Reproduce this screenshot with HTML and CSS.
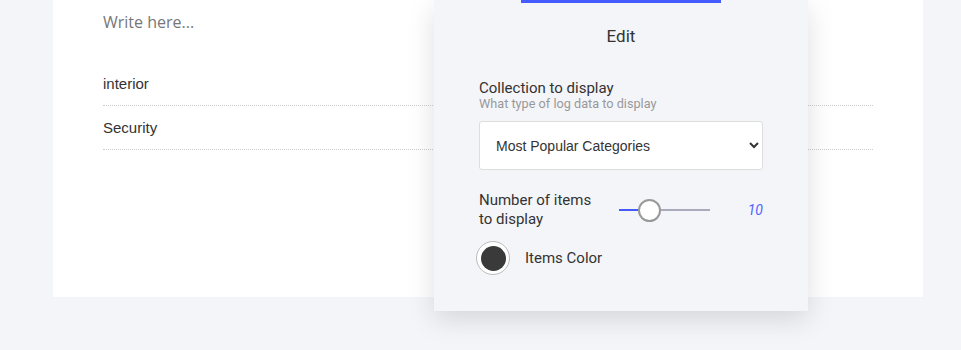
FILE: index.html
```html
<!DOCTYPE html>
<html lang="en">
<head>
    <meta charset="UTF-8">
    <meta name="viewport" content="width=device-width, initial-scale=1.0">
    <title>Edit widget</title>
    <link rel="stylesheet" href="styles.css">
</head>
<body>
    <div class="page">
        <div class="card">
            <div class="write">Write here...</div>
            <ul class="list">
                <li>interior</li>
                <li>Security</li>
            </ul>
        </div>

        <div class="popover">
            <div class="popover-bar"></div>
            <h3>Edit</h3>
            <div class="field">
                <label for="collection">Collection to display</label>
                <span class="hint">What type of log data to display</span>
                <select id="collection">
                    <option>Most Popular Categories</option>
                    <option>Latest Entries</option>
                </select>
            </div>
            <div class="range-row">
                <label for="items">Number of items to display</label>
                <input type="range" id="items" min="0" max="36" value="10">
                <span class="range-value">10</span>
            </div>
            <div class="color-row">
                <span class="swatch"><span></span></span>
                <span>Items Color</span>
            </div>
        </div>
    </div>
</body>
</html>
```

FILE: styles.css
```css
* {
    box-sizing: border-box;
}
body {
    margin: 0;
    background-color: #f4f5f9;
    font-family: "Liberation Sans", Arial, sans-serif;
}
.page {
    position: relative;
    padding: 0 38px 0 53px;
    height: 350px;
}
.card {
    background-color: #fff;
    height: 297px;
    padding: 8px 50px 0;
}
.write {
    font-family: "Open Sans", sans-serif;
    font-size: 16px;
    color: #777;
    line-height: 28px;
}
.list {
    list-style: none;
    margin: 26px 0 0;
    padding: 0;
}
.list li {
    font-size: 15px;
    color: #333;
    height: 44px;
    line-height: 44px;
    border-bottom: 1px dotted #ccc;
}

.popover {
    position: absolute;
    top: 0;
    left: 434px;
    width: 374px;
    height: 311px;
    background-color: #f4f5f9;
    box-shadow: 0 8px 26px rgba(0, 0, 0, 0.13);
    padding: 0 45px;
    font-family: Roboto, sans-serif;
    color: #333;
}
.popover-bar {
    width: 200px;
    height: 3px;
    margin-left: 42px;
    background-color: #435bff;
}
.popover h3 {
    text-align: center;
    font-weight: normal;
    font-size: 17px;
    margin: 24px 0 0;
    line-height: 19px;
}
.field {
    margin-top: 33px;
}
.field label {
    display: block;
    font-size: 15px;
    line-height: 18px;
}
.hint {
    display: block;
    font-size: 12.7px;
    color: #999;
    line-height: 14px;
}
.field select {
    display: block;
    width: 100%;
    height: 49px;
    margin-top: 10px;
    padding: 0 8px 0 12px;
    border: 1px solid #ddd;
    border-radius: 3px;
    background-color: #fff;
    font-family: "Liberation Sans", Arial, sans-serif;
    font-size: 14px;
    color: #333;
}

.range-row {
    display: flex;
    align-items: center;
    margin-top: 21px;
}
.range-row label {
    width: 140px;
    padding-right: 24px;
    font-size: 15px;
    line-height: 19px;
}
.range-row input[type="range"] {
    -webkit-appearance: none;
    appearance: none;
    width: 91px;
    height: 2px;
    margin: 0;
    background: linear-gradient(to right, #435bff 0 21%, #aab 21%);
}
.range-row input[type="range"]::-webkit-slider-thumb {
    -webkit-appearance: none;
    width: 23px;
    height: 23px;
    border-radius: 50%;
    background-color: #fff;
    border: 2px solid #999;
}
.range-value {
    margin-left: auto;
    font-size: 14px;
    font-style: italic;
    color: #5064ff;
}

.color-row {
    display: flex;
    align-items: center;
    gap: 15px;
    margin: 12px 0 0 -3px;
    font-size: 15px;
}
.swatch {
    width: 34px;
    height: 34px;
    border-radius: 50%;
    border: 1px solid #bbb;
    background-color: #fff;
    display: flex;
    align-items: center;
    justify-content: center;
}
.swatch span {
    width: 25px;
    height: 25px;
    border-radius: 50%;
    background-color: #3a3a3a;
}
```
